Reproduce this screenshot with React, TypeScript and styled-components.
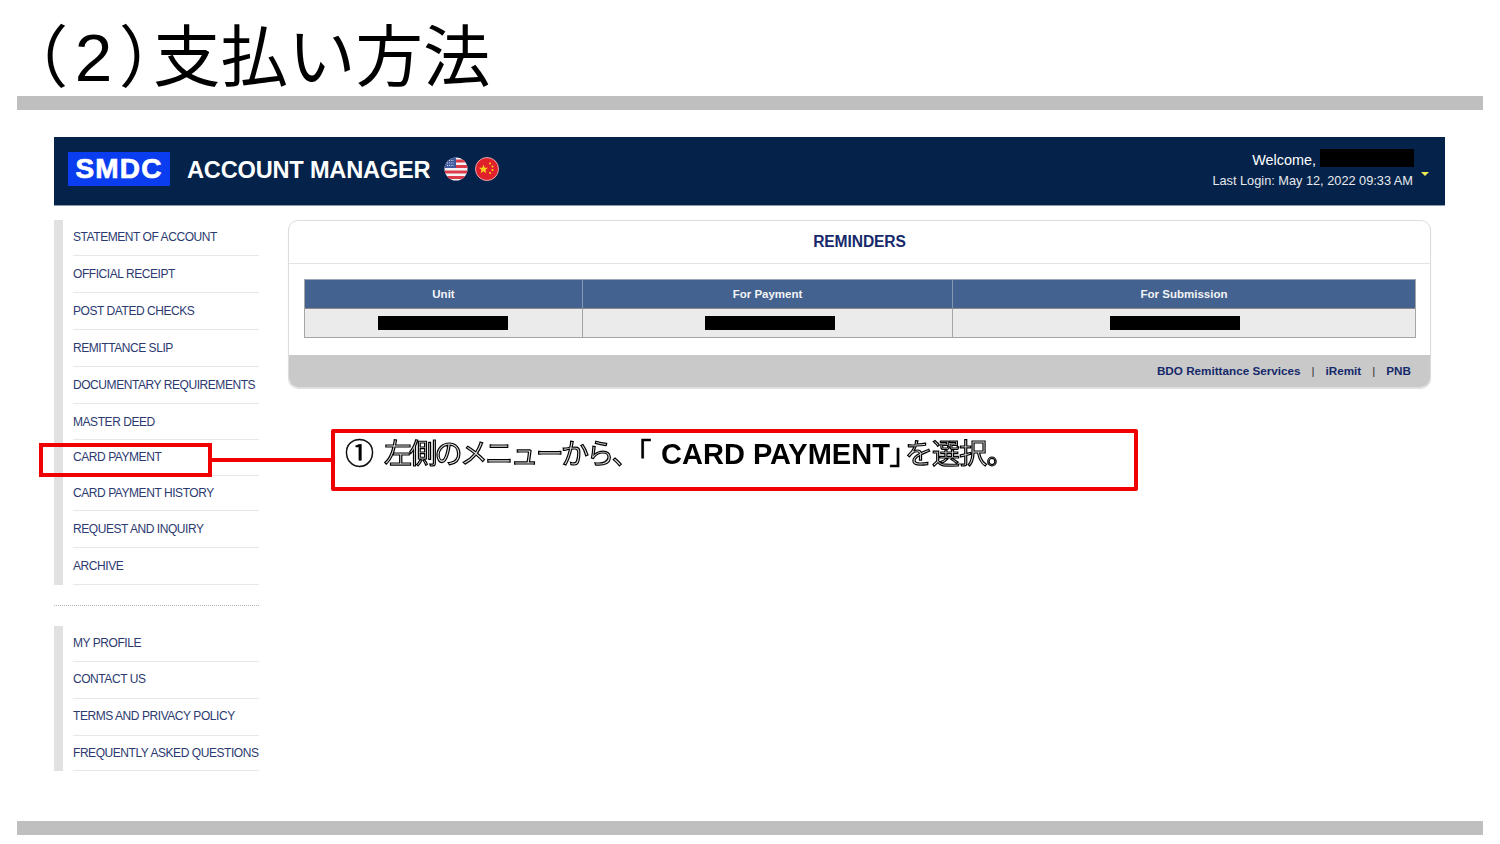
import React from "react";
import styled, { createGlobalStyle } from "styled-components";

const GlobalStyle = createGlobalStyle`
  html, body {
    margin: 0;
    padding: 0;
    background: #fff;
  }
`;

const Slide = styled.div`
  position: relative;
  width: 1500px;
  height: 844px;
  overflow: hidden;
  display: flex;
  flex-direction: column;
  background: #fff;
  font-family: "Liberation Sans", Arial, sans-serif;
`;

const Title = styled.h1`
  height: 96px;
  margin: 0;
  padding-left: 32px;
  box-sizing: border-box;
  font-family: "Noto Sans CJK JP", "Liberation Sans", sans-serif;
  font-size: 67.5px;
  font-weight: 400;
  line-height: 103px;
  color: #000;
  white-space: nowrap;
`;

const TitleParen = styled.span`
  font-feature-settings: "palt";
  font-family: "Liberation Sans", "Noto Sans CJK JP", sans-serif;
  letter-spacing: 9px;
  margin-right: -11px;
`;

const SlideRule = styled.div`
  flex: none;
  height: 14px;
  margin: 0 17px;
  background: #bfbfbf;
`;

const Portal = styled.div`
  flex: 1;
  display: flex;
  flex-direction: column;
  margin: 27px 55px 0 54px;
`;

const Header = styled.header`
  flex: none;
  height: 68px;
  display: flex;
  align-items: center;
  padding: 0 16px 0 14px;
  background: #05234a;
  border-bottom: 1px solid #8a9bb0;
  box-sizing: content-box;
  color: #fff;
`;

const Logo = styled.div`
  width: 102px;
  height: 34px;
  margin-bottom: 4px;
  display: flex;
  align-items: center;
  justify-content: center;
  background: #0a3cf0;
  font-size: 28px;
  font-weight: 700;
  letter-spacing: 1.2px;
  -webkit-text-stroke: 0.7px #fff;
`;

const AppName = styled.div`
  margin: 0 0 1px 17px;
  font-size: 23.6px;
  font-weight: 700;
  letter-spacing: -0.2px;
`;

const Flags = styled.div`
  display: flex;
  gap: 7px;
  margin: 0 0 4px 14px;
`;

const UserBox = styled.div`
  margin-left: auto;
  display: flex;
  flex-direction: column;
  align-items: flex-end;
  gap: 5px;
  padding-bottom: 3px;
`;

const Welcome = styled.div`
  display: flex;
  align-items: center;
  gap: 4px;
  font-size: 14.4px;
`;

const NameRedaction = styled.span`
  width: 94px;
  height: 18px;
  margin: -4px -1px 0 0;
  background: #000;
`;

const LastLogin = styled.div`
  font-size: 12.75px;
  color: #e6e9ee;
`;

const Caret = styled.div`
  width: 0;
  height: 0;
  margin: 6px 0 0 8px;
  border-left: 4px solid transparent;
  border-right: 4px solid transparent;
  border-top: 4px solid #ecec50;
`;

const Body = styled.div`
  display: flex;
  align-items: flex-start;
  margin-top: 14px;
`;

const Sidebar = styled.nav`
  flex: none;
  width: 205px;
`;

const MenuGroup = styled.ul`
  margin: 0;
  padding: 0 0 0 19px;
  list-style: none;
  background: linear-gradient(#e1e1e1, #e1e1e1) left top / 9px 100% no-repeat;
`;

const MenuItem = styled.li<{ $height: number; $top: number }>`
  height: ${(p) => p.$height}px;
  box-sizing: border-box;
  padding-top: ${(p) => p.$top}px;
  border-bottom: 1px solid #e8e8e8;
  font-size: 12px;
  line-height: 15px;
  letter-spacing: -0.44px;
  color: #2b3a70;
  white-space: nowrap;
`;

const MenuDivider = styled.div`
  height: 1px;
  margin: 20px 0 19px;
  border-top: 1px dotted #b5b5b5;
`;

const Card = styled.section`
  flex: none;
  width: 1143px;
  margin-left: 29px;
  border: 1px solid #dcdcdc;
  border-radius: 10px;
  box-sizing: border-box;
  height: 168px;
  display: flex;
  flex-direction: column;
  overflow: hidden;
  box-shadow: 0 1px 1px rgba(0, 0, 0, 0.12);
`;

const CardTitle = styled.h2`
  height: 41px;
  margin: 0;
  padding-bottom: 1px;
  display: flex;
  align-items: center;
  justify-content: center;
  border-bottom: 1px solid #e4e4e4;
  box-sizing: content-box;
  font-size: 15.6px;
  font-weight: 700;
  letter-spacing: -0.1px;
  color: #16296b;
`;

const CardBody = styled.div`
  flex: 1;
  padding: 15px 14px 0 15px;
`;

const ReminderTable = styled.div`
  display: grid;
  grid-template-columns: 277px 370px 1fr;
  border: 1px solid #a5a5a5;
  border-top-color: #9aa8bd;
`;

const HeadCell = styled.div`
  height: 27px;
  padding-bottom: 1px;
  display: flex;
  align-items: center;
  justify-content: center;
  background: #43628f;
  border-left: 1px solid #8397b3;
  border-bottom: 1px solid #8a8a8a;
  font-size: 11.5px;
  font-weight: 700;
  color: #f2f4f7;
  &:first-child {
    border-left: 0;
  }
`;

const ValueCell = styled.div<{ $shift: number }>`
  height: 28px;
  display: flex;
  align-items: center;
  justify-content: center;
  background: #ebebeb;
  border-left: 1px solid #a5a5a5;
  &:nth-child(4) {
    border-left: 0;
  }
  & > span {
    transform: translateX(${(p) => p.$shift}px);
  }
`;

const CellRedaction = styled.span`
  width: 130px;
  height: 14px;
  background: #000;
`;

const CardFooter = styled.div`
  flex: none;
  height: 31px;
  padding: 0 19px 1px 0;
  display: flex;
  align-items: center;
  justify-content: flex-end;
  gap: 11px;
  background: #c9c9c9;
  font-size: 11.7px;
  font-weight: 700;
  color: #16296b;
`;

const FooterSeparator = styled.span`
  font-weight: 400;
  color: #333;
`;

const BottomRule = styled(SlideRule)`
  margin-bottom: 9px;
`;

const MenuMarker = styled.div`
  position: absolute;
  left: 39px;
  top: 443px;
  width: 173px;
  height: 34px;
  box-sizing: border-box;
  border: 4px solid #f00000;
`;

const Connector = styled.div`
  position: absolute;
  left: 212px;
  top: 458px;
  width: 120px;
  height: 4px;
  background: #f00000;
`;

const Callout = styled.div`
  position: absolute;
  left: 331px;
  top: 429px;
  width: 807px;
  height: 62px;
  box-sizing: border-box;
  padding: 3px 0 0 10px;
  border: 4px solid #f00000;
  border-radius: 2px;
  background: #fff;
  font-family: "Liberation Sans", "Noto Sans CJK JP", sans-serif;
  font-size: 29px;
  line-height: 36px;
  color: #000;
  white-space: nowrap;
  will-change: transform;
`;

const CalloutNumber = styled.span`
  display: inline-block;
  margin-right: 10px;
  -webkit-text-stroke: 0.5px #000;
`;

const CalloutJa = styled.span<{ $tracking: number }>`
  color: #e4e4e4;
  -webkit-text-stroke: 1.2px #000;
  letter-spacing: ${(p) => p.$tracking}px;
  font-size: 28px;
`;

const CalloutBracket = styled.span<{ $after: number }>`
  margin-right: ${(p) => p.$after}px;
  font-feature-settings: "palt";
  font-size: 28px;
  -webkit-text-stroke: 0.6px #000;
`;

const CalloutLatin = styled.span`
  font-weight: 700;
`;

// [label, row height, text offset]
const mainMenu: [string, number, number][] = [
  ["STATEMENT OF ACCOUNT", 36, 10],
  ["OFFICIAL RECEIPT", 37, 11],
  ["POST DATED CHECKS", 37, 11],
  ["REMITTANCE SLIP", 37, 11],
  ["DOCUMENTARY REQUIREMENTS", 37, 11],
  ["MASTER DEED", 36, 11],
  ["CARD PAYMENT", 36, 10],
  ["CARD PAYMENT HISTORY", 35, 10],
  ["REQUEST AND INQUIRY", 37, 11],
  ["ARCHIVE", 37, 11],
];

const accountMenu: [string, number, number][] = [
  ["MY PROFILE", 36, 10],
  ["CONTACT US", 37, 10],
  ["TERMS AND PRIVACY POLICY", 37, 10],
  ["FREQUENTLY ASKED QUESTIONS", 35, 10],
];

const UsFlag = () => (
  <svg width="24" height="24" viewBox="0 0 24 24">
    <defs>
      <clipPath id="us-clip">
        <circle cx="12" cy="12" r="11.5" />
      </clipPath>
    </defs>
    <g clipPath="url(#us-clip)">
      <rect width="24" height="24" fill="#f4f4f6" />
      <rect y="2.5" width="24" height="3" fill="#dc3c4a" />
      <rect y="8" width="24" height="3" fill="#dc3c4a" />
      <rect y="13.5" width="24" height="3" fill="#dc3c4a" />
      <rect y="19" width="24" height="3" fill="#dc3c4a" />
      <rect width="12" height="11" fill="#3f5a9e" />
      <path d="M3 3.5h7M3 6h7M3 8.5h7" stroke="#dfe5f2" strokeWidth="1" strokeDasharray="1 1.2" />
    </g>
  </svg>
);

const CnFlag = () => (
  <svg width="24" height="24" viewBox="0 0 24 24">
    <circle cx="12" cy="12" r="11.5" fill="#e0202a" stroke="#f3c9c9" strokeWidth="0.8" />
    <path d="M8.5 7.5l1.2 3.2 3.3.1-2.6 2.1.9 3.3-2.8-1.9-2.8 1.9.9-3.3-2.6-2.1 3.3-.1z" fill="#f7d31f" />
    <circle cx="15" cy="6.5" r="1" fill="#f7d31f" />
    <circle cx="17.5" cy="9.5" r="1" fill="#f7d31f" />
    <circle cx="17.5" cy="13" r="1" fill="#f7d31f" />
    <circle cx="15" cy="16" r="1" fill="#f7d31f" />
  </svg>
);

const App: React.FC = () => {
  return (
    <Slide>
      <GlobalStyle />
      <Title>
        <TitleParen>（2）</TitleParen>支払い方法
      </Title>
      <SlideRule />
      <Portal>
        <Header>
          <Logo>SMDC</Logo>
          <AppName>ACCOUNT MANAGER</AppName>
          <Flags>
            <UsFlag />
            <CnFlag />
          </Flags>
          <UserBox>
            <Welcome>
              Welcome,
              <NameRedaction />
            </Welcome>
            <LastLogin>Last Login: May 12, 2022 09:33 AM</LastLogin>
          </UserBox>
          <Caret />
        </Header>
        <Body>
          <Sidebar>
            <MenuGroup>
              {mainMenu.map(([label, height, top]) => (
                <MenuItem key={label} $height={height} $top={top}>
                  {label}
                </MenuItem>
              ))}
            </MenuGroup>
            <MenuDivider />
            <MenuGroup>
              {accountMenu.map(([label, height, top]) => (
                <MenuItem key={label} $height={height} $top={top}>
                  {label}
                </MenuItem>
              ))}
            </MenuGroup>
          </Sidebar>
          <Card>
            <CardTitle>REMINDERS</CardTitle>
            <CardBody>
              <ReminderTable>
                <HeadCell>Unit</HeadCell>
                <HeadCell>For Payment</HeadCell>
                <HeadCell>For Submission</HeadCell>
                <ValueCell $shift={-1}>
                  <CellRedaction />
                </ValueCell>
                <ValueCell $shift={2}>
                  <CellRedaction />
                </ValueCell>
                <ValueCell $shift={-9}>
                  <CellRedaction />
                </ValueCell>
              </ReminderTable>
            </CardBody>
            <CardFooter>
              <span>BDO Remittance Services</span>
              <FooterSeparator>|</FooterSeparator>
              <span>iRemit</span>
              <FooterSeparator>|</FooterSeparator>
              <span>PNB</span>
            </CardFooter>
          </Card>
        </Body>
      </Portal>
      <BottomRule />
      <MenuMarker />
      <Connector />
      <Callout>
        <CalloutNumber>①</CalloutNumber>
        <CalloutJa $tracking={-2.7}>左側のメニューから、</CalloutJa>
        <CalloutBracket $after={10}>「</CalloutBracket>
        <CalloutLatin>CARD PAYMENT</CalloutLatin>
        <CalloutBracket $after={1}>」</CalloutBracket>
        <CalloutJa $tracking={-0.8}>を選択。</CalloutJa>
      </Callout>
    </Slide>
  );
};

export default App;
